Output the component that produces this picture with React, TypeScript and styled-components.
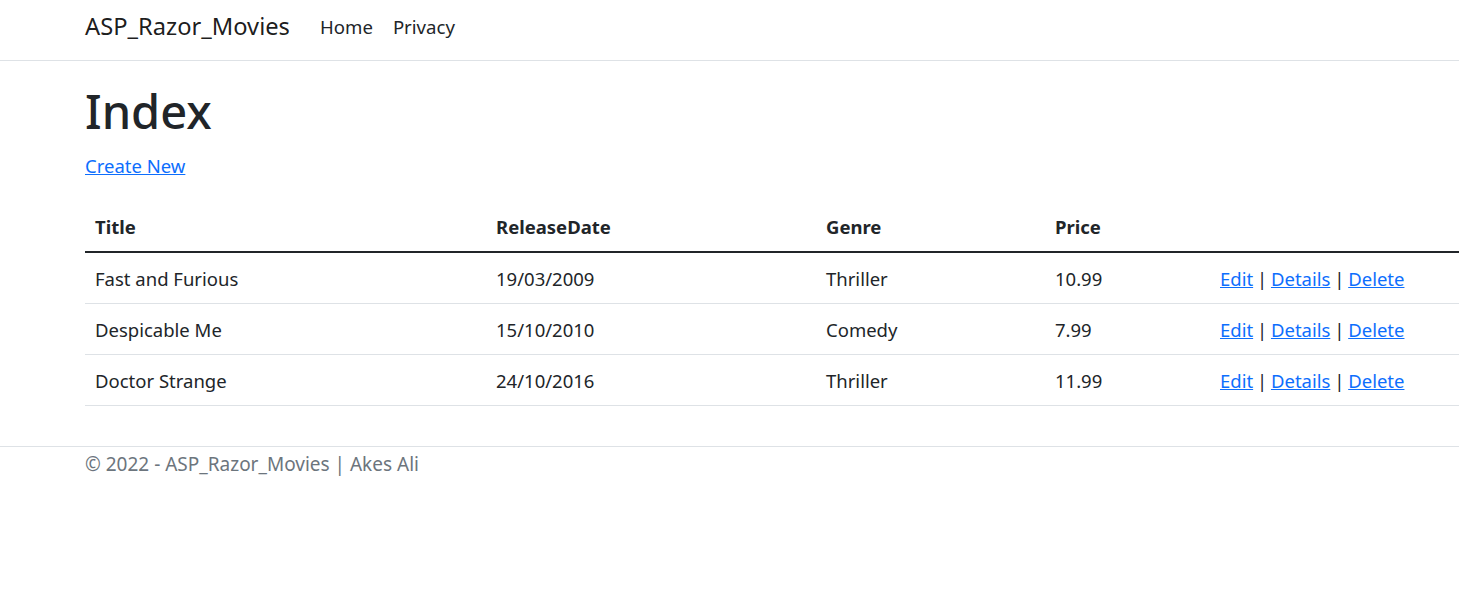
import React from "react";
import styled, { createGlobalStyle } from "styled-components";

const FONT = `"Noto Sans", "Open Sans", sans-serif`;

const GlobalStyle = createGlobalStyle`
  html, body {
    margin: 0;
    padding: 0;
    overflow-x: hidden;
    background: #fff;
  }
  body {
    font-family: ${FONT};
    font-size: 18.5px;
    line-height: 1.5;
    color: #212529;
  }
  * { box-sizing: border-box; }
`;

const Header = styled.header`
  height: 61px;
  border-bottom: 1px solid #dee2e6;
  display: flex;
  align-items: center;
  padding: 0 0 7px 85px;
`;

const Brand = styled.a`
  font-size: 23.7px;
  color: rgba(0, 0, 0, 0.9);
  text-decoration: none;
  margin-right: 20px;
  line-height: 1.5;
`;

const NavList = styled.nav`
  display: flex;
`;

const NavLink = styled.a`
  color: #212529;
  text-decoration: none;
  padding: 0 10px;
  font-size: 18.6px;
`;

const Main = styled.main`
  padding: 20px 0 20px 85px;
`;

const Heading = styled.h1`
  font-size: 47px;
  font-weight: 500;
  line-height: 60px;
  margin: 0 0 10px;
`;

const Para = styled.p`
  margin: 0 0 20px;
  line-height: 30px;
`;

const Link = styled.a`
  color: #0d6efd;
  text-decoration: underline;
`;

const Table = styled.table`
  border-collapse: collapse;
  table-layout: fixed;
  width: 1425px;
  margin-bottom: 20px;
`;

const Th = styled.th<{ $w?: number }>`
  text-align: left;
  font-weight: 700;
  padding: 11px 10px 9px;
  line-height: 30px;
  border-bottom: 2px solid #212529;
  width: ${(p) => (p.$w ? `${p.$w}px` : "auto")};
`;

const Td = styled.td`
  padding: 11px 10px 9px;
  line-height: 30px;
  border-bottom: 1px solid #dee2e6;
`;

const Sep = styled.span`
  color: #212529;
  margin: 0 -1px;
`;

const Footer = styled.footer`
  border-top: 1px solid #dee2e6;
  color: #6c757d;
  padding: 0 0 0 85px;
  font-size: 19px;
  line-height: 34px;
`;

const movies = [
  { title: "Fast and Furious", date: "19/03/2009", genre: "Thriller", price: "10.99" },
  { title: "Despicable Me", date: "15/10/2010", genre: "Comedy", price: "7.99" },
  { title: "Doctor Strange", date: "24/10/2016", genre: "Thriller", price: "11.99" },
];

export default function App() {
  return (
    <>
      <GlobalStyle />
      <Header>
        <Brand href="#">ASP_Razor_Movies</Brand>
        <NavList>
          <NavLink href="#">Home</NavLink>
          <NavLink href="#">Privacy</NavLink>
        </NavList>
      </Header>
      <Main>
        <Heading>Index</Heading>
        <Para>
          <Link href="#">Create New</Link>
        </Para>
        <Table>
          <thead>
            <tr>
              <Th $w={401}>Title</Th>
              <Th $w={330}>ReleaseDate</Th>
              <Th $w={229}>Genre</Th>
              <Th $w={165}>Price</Th>
              <Th />
            </tr>
          </thead>
          <tbody>
            {movies.map((m) => (
              <tr key={m.title}>
                <Td>{m.title}</Td>
                <Td>{m.date}</Td>
                <Td>{m.genre}</Td>
                <Td>{m.price}</Td>
                <Td>
                  <Link href="#">Edit</Link> <Sep>|</Sep> <Link href="#">Details</Link>{" "}
                  <Sep>|</Sep> <Link href="#">Delete</Link>
                </Td>
              </tr>
            ))}
          </tbody>
        </Table>
      </Main>
      <Footer>© 2022 - ASP_Razor_Movies | Akes Ali</Footer>
    </>
  );
}
